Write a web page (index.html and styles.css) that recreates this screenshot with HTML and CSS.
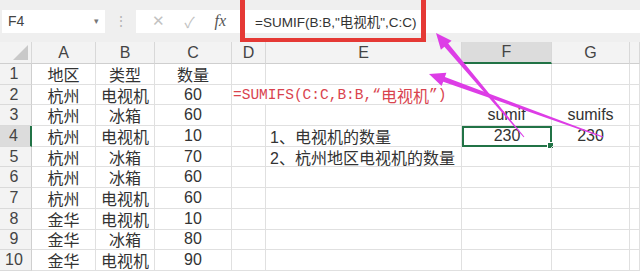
FILE: index.html
```html
<!DOCTYPE html>
<html>

<head>
  <meta charset="utf-8">
  <title>SUMIF / SUMIFS</title>
  <link rel="stylesheet" href="styles.css">
</head>

<body>
  <div class="formula-bar">
    <div class="name-box">
      <span>F4</span>
      <span class="caret">▾</span>
    </div>
    <div class="bar-sep">⋮</div>
    <div class="bar-buttons">
      <span class="btn-x">✕</span>
      <span class="btn-ok">✓</span>
      <span class="btn-fx">fx</span>
    </div>
    <div class="formula-input">=SUMIF(B:B,"电视机",C:C)</div>
    <div class="highlight-box"></div>
  </div>

  <div class="sheet">
    <div class="corner"><span class="corner-tri"></span></div>
    <div class="col-hdr">A</div>
    <div class="col-hdr">B</div>
    <div class="col-hdr">C</div>
    <div class="col-hdr">D</div>
    <div class="col-hdr">E</div>
    <div class="col-hdr active">F</div>
    <div class="col-hdr">G</div>
    <div class="col-hdr"></div>

    <div class="row-hdr">1</div>
    <div class="cell">地区</div><div class="cell">类型</div><div class="cell">数量</div>
    <div class="cell"></div><div class="cell"></div><div class="cell"></div><div class="cell"></div><div class="cell"></div>

    <div class="row-hdr">2</div>
    <div class="cell">杭州</div><div class="cell">电视机</div><div class="cell">60</div>
    <div class="cell note span2">=SUMIFS(C:C,B:B,“<span class="cjk">电视机</span>”)</div>
    <div class="cell"></div><div class="cell"></div><div class="cell"></div>

    <div class="row-hdr">3</div>
    <div class="cell">杭州</div><div class="cell">冰箱</div><div class="cell">60</div>
    <div class="cell"></div><div class="cell"></div><div class="cell">sumif</div><div class="cell">sumifs</div><div class="cell"></div>

    <div class="row-hdr active">4</div>
    <div class="cell">杭州</div><div class="cell">电视机</div><div class="cell">10</div>
    <div class="cell"></div><div class="cell left">1、电视机的数量</div>
    <div class="cell selected">230<span class="handle"></span></div><div class="cell">230</div><div class="cell"></div>

    <div class="row-hdr">5</div>
    <div class="cell">杭州</div><div class="cell">冰箱</div><div class="cell">70</div>
    <div class="cell"></div><div class="cell left">2、杭州地区电视机的数量</div>
    <div class="cell"></div><div class="cell"></div><div class="cell"></div>

    <div class="row-hdr">6</div>
    <div class="cell">杭州</div><div class="cell">冰箱</div><div class="cell">60</div>
    <div class="cell"></div><div class="cell"></div><div class="cell"></div><div class="cell"></div><div class="cell"></div>

    <div class="row-hdr">7</div>
    <div class="cell">杭州</div><div class="cell">电视机</div><div class="cell">60</div>
    <div class="cell"></div><div class="cell"></div><div class="cell"></div><div class="cell"></div><div class="cell"></div>

    <div class="row-hdr">8</div>
    <div class="cell">金华</div><div class="cell">电视机</div><div class="cell">10</div>
    <div class="cell"></div><div class="cell"></div><div class="cell"></div><div class="cell"></div><div class="cell"></div>

    <div class="row-hdr">9</div>
    <div class="cell">金华</div><div class="cell">冰箱</div><div class="cell">80</div>
    <div class="cell"></div><div class="cell"></div><div class="cell"></div><div class="cell"></div><div class="cell"></div>

    <div class="row-hdr">10</div>
    <div class="cell">金华</div><div class="cell">电视机</div><div class="cell">90</div>
    <div class="cell"></div><div class="cell"></div><div class="cell"></div><div class="cell"></div><div class="cell"></div>
  </div>

  <!-- annotation arrows drawn over the sheet -->
  <svg class="arrows" width="640" height="276" viewBox="0 0 640 276">
    <polygon points="524.4,136.7 448.2,43.6 451.6,40.7 436,33 440.9,49.7 444.4,46.8 523.6,137.3" />
    <polygon points="603.2,136.5 444.9,77.1 446.4,72.8 429,74 441.6,86 443.2,81.8 602.8,137.5" />
  </svg>
</body>

</html>
```

FILE: styles.css
```css
body {
  margin: 0;
  width: 640px;
  height: 276px;
  overflow: hidden;
  position: relative;
  font-family: 'Liberation Sans', 'Noto Sans CJK SC', sans-serif;
  color: #333;
  background: #fff;
}

.formula-bar {
  position: relative;
  height: 42px;
  background: #efefef;
  display: flex;
  align-items: center;
  padding-left: 2px;
  box-sizing: border-box;
}

.name-box {
  width: 103px;
  height: 23px;
  background: #fff;
  display: flex;
  align-items: center;
  justify-content: space-between;
  padding: 0 6px 0 6px;
  box-sizing: border-box;
  font-size: 14px;
  color: #444;
}

.caret {
  font-size: 9px;
  color: #777;
}

.bar-sep {
  width: 31px;
  text-align: center;
  color: #b5b5b5;
  font-size: 14px;
}

.bar-buttons {
  width: 104px;
  height: 23px;
  background: #fff;
  display: flex;
  align-items: center;
  justify-content: space-around;
  padding: 0 4px 0 6px;
  box-sizing: border-box;
}

.btn-x,
.btn-ok {
  color: #c2c2c2;
  font-size: 15px;
}

.btn-fx {
  font-family: 'Liberation Serif', serif;
  font-style: italic;
  font-size: 16px;
  color: #555;
}

.formula-input {
  flex: 1;
  height: 23px;
  background: #fff;
  display: flex;
  align-items: center;
  padding-left: 15px;
  font-size: 13.5px;
  color: #333;
}

.highlight-box {
  position: absolute;
  left: 240px;
  top: -5px;
  width: 186px;
  height: 48px;
  border: 5px solid #e53935;
  box-sizing: border-box;
}

.sheet {
  display: grid;
  grid-template-columns: 32px 64px 59px 77px 34px 196px 90px 78px 10px;
  grid-template-rows: 22px;
  grid-auto-rows: 20.7px;
  font-size: 16px;
}

.sheet > div {
  box-sizing: border-box;
  display: flex;
  align-items: center;
  justify-content: center;
  white-space: nowrap;
  position: relative;
}

.corner,
.col-hdr {
  background: #f3f3f3;
  border-right: 1px solid #d8d8d8;
  border-bottom: 1px solid #cfcfcf;
  color: #444;
}

.corner-tri {
  position: absolute;
  right: 3px;
  bottom: 3px;
  width: 0;
  height: 0;
  border-left: 15px solid transparent;
  border-bottom: 15px solid #c9c9c9;
}

.col-hdr.active {
  background: #dcdcdc;
  border-bottom: 2px solid #217346;
}

.row-hdr {
  background: #f3f3f3;
  border-right: 1px solid #cfcfcf;
  border-bottom: 1px solid #dadada;
  color: #444;
  padding-right: 3px;
}

.row-hdr.active {
  background: #dcdcdc;
  border-right: 2px solid #217346;
}

.cell {
  border-right: 1px solid #e0e0e0;
  border-bottom: 1px solid #e0e0e0;
}

.cell.left {
  justify-content: flex-start;
  padding-left: 4px;
}

.cell.note {
  grid-column: span 2;
  justify-content: flex-start;
  padding-left: 1px;
  font-family: 'Liberation Mono', 'Noto Sans CJK SC', monospace;
  font-size: 14.5px;
  color: #d9434e;
}

.cjk {
  font-family: 'Noto Sans CJK SC', sans-serif;
  font-size: 16px;
}

.cell.selected {
  border: 2px solid #217346;
}

.handle {
  position: absolute;
  right: -4px;
  bottom: -4px;
  width: 5px;
  height: 5px;
  background: #217346;
  border: 1px solid #fff;
}

.arrows {
  position: absolute;
  left: 0;
  top: 0;
  pointer-events: none;
}

.arrows polygon {
  fill: #dd3de6;
}
```
